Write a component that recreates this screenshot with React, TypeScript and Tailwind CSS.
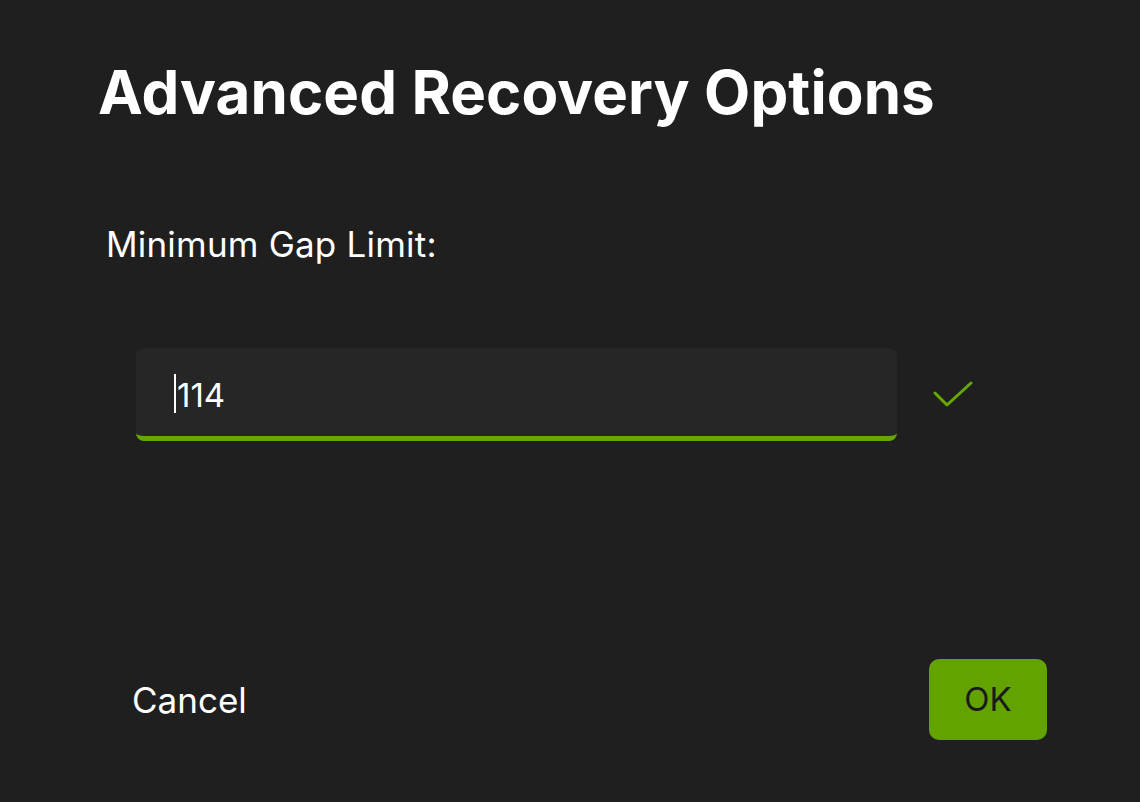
import { useState } from "react";

export default function App() {
  const [value, setValue] = useState("114");

  return (
    <div className="flex h-[802px] w-full flex-col bg-[#1f1f1f] font-['Inter',sans-serif] text-white">
      <div className="px-[98px] pt-[52px]">
        <h1 className="text-[60px] font-bold leading-[80px] tracking-[0.1px]">
          Advanced Recovery Options
        </h1>
      </div>

      <div className="px-[106px] pt-[92px]">
        <p className="text-[35px] leading-[40px] tracking-[0.2px]">Minimum Gap Limit:</p>
      </div>

      <div className="flex items-center gap-[36px] pl-[136px] pt-[84px]">
        <div className="flex h-[93px] w-[761px] items-center rounded-[8px] border-b-[5px] border-[#66a800] bg-[#262626] pl-[38px]">
          <span className="mt-[3px] h-[39px] w-[2px] bg-white" />
          <input
            value={value}
            onChange={(e) => setValue(e.target.value)}
            className="ml-[1px] w-full bg-transparent pt-[8px] text-[33px] text-white outline-none"
          />
        </div>
        <svg width="40" height="28" viewBox="0 0 40 28" fill="none">
          <path
            d="M2 12 L14 24 L38 2"
            stroke="#66a800"
            strokeWidth="3"
            strokeLinecap="round"
            strokeLinejoin="round"
          />
        </svg>
      </div>

      <div className="mt-auto flex items-center justify-between pb-[62px] pl-[132px] pr-[93px]">
        <button className="text-[35px] leading-[40px] text-white">Cancel</button>
        <button className="flex h-[81px] w-[118px] items-center justify-center rounded-[10px] bg-[#62a300] text-[33px] text-[#1a1a1a]">
          OK
        </button>
      </div>
    </div>
  );
}
